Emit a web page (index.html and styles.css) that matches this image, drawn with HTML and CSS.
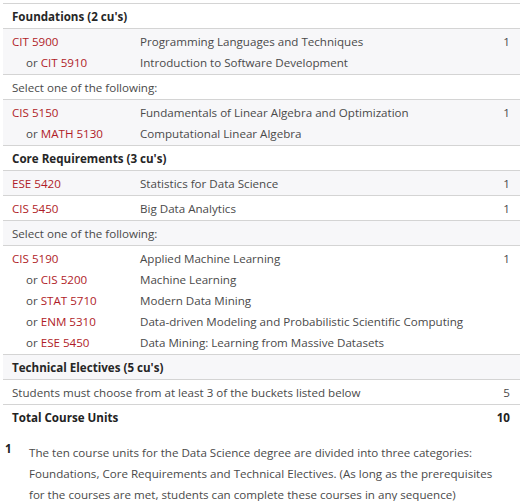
FILE: index.html
```html
<!DOCTYPE html>
<html lang="en">
<head>
<meta charset="utf-8">
<title>Data Science Curriculum</title>
<link rel="stylesheet" href="styles.css">
</head>
<body>
<table class="plan">
  <colgroup>
    <col class="c-code">
    <col class="c-title">
    <col class="c-hours">
  </colgroup>
  <tbody>
    <tr class="head"><td colspan="3">Foundations (2 cu's)</td></tr>
    <tr class="alt">
      <td class="code"><div><a href="#">CIT 5900</a></div><div class="or">or <a href="#">CIT 5910</a></div></td>
      <td class="title"><div>Programming Languages and Techniques</div><div>Introduction to Software Development</div></td>
      <td class="hours">1</td>
    </tr>
    <tr><td colspan="3">Select one of the following:</td></tr>
    <tr class="alt">
      <td class="code"><div><a href="#">CIS 5150</a></div><div class="or">or <a href="#">MATH 5130</a></div></td>
      <td class="title"><div>Fundamentals of Linear Algebra and Optimization</div><div>Computational Linear Algebra</div></td>
      <td class="hours">1</td>
    </tr>
    <tr class="head"><td colspan="3">Core Requirements (3 cu's)</td></tr>
    <tr class="alt">
      <td class="code"><a href="#">ESE 5420</a></td>
      <td class="title">Statistics for Data Science</td>
      <td class="hours">1</td>
    </tr>
    <tr>
      <td class="code"><a href="#">CIS 5450</a></td>
      <td class="title">Big Data Analytics</td>
      <td class="hours">1</td>
    </tr>
    <tr class="alt"><td colspan="3">Select one of the following:</td></tr>
    <tr>
      <td class="code">
        <div><a href="#">CIS 5190</a></div>
        <div class="or">or <a href="#">CIS 5200</a></div>
        <div class="or">or <a href="#">STAT 5710</a></div>
        <div class="or">or <a href="#">ENM 5310</a></div>
        <div class="or">or <a href="#">ESE 5450</a></div>
      </td>
      <td class="title">
        <div>Applied Machine Learning</div>
        <div>Machine Learning</div>
        <div>Modern Data Mining</div>
        <div>Data-driven Modeling and Probabilistic Scientific Computing</div>
        <div>Data Mining: Learning from Massive Datasets</div>
      </td>
      <td class="hours">1</td>
    </tr>
    <tr class="head alt"><td colspan="3">Technical Electives (5 cu's)</td></tr>
    <tr>
      <td colspan="2">Students must choose from at least 3 of the buckets listed below</td>
      <td class="hours">5</td>
    </tr>
    <tr class="total">
      <td colspan="2">Total Course Units</td>
      <td class="hours">10</td>
    </tr>
  </tbody>
</table>
<div class="footnote">
  <span class="fn-num">1</span>
  <p class="fn-text">The ten course units for the Data Science degree are divided into three categories: Foundations, Core Requirements and Technical Electives. (As long as the prerequisites for the courses are met, students can complete these courses in any sequence)</p>
</div>
</body>
</html>
```

FILE: styles.css
```css
html, body {
  margin: 0;
  padding: 0;
  background: #fff;
}
body {
  padding: 3px 6px 0 3px;
  font-family: "Open Sans", "Liberation Sans", sans-serif;
  font-size: 11.6px;
  line-height: 21px;
  color: #4a4a4a;
}
.plan {
  width: 517px;
  table-layout: fixed;
  border-collapse: collapse;
  border-top: 1px solid #d4d4d4;
}
.c-code {
  width: 128px;
}
.c-hours {
  width: 40px;
}
.plan td {
  padding: 2px 9px 1px 9px;
  vertical-align: top;
  border-bottom: 1px solid #d4d4d4;
  white-space: nowrap;
}
.plan tr.total td {
  border-bottom: none;
  font-weight: 700;
  color: #222;
}
.plan tr.alt td {
  background: #f7f7f9;
}
.plan tr.head td {
  font-weight: 700;
  color: #262626;
}
.plan td.hours {
  text-align: right;
  padding-right: 10px;
}
.or {
  padding-left: 14px;
}
a {
  color: #b01c28;
  text-decoration: none;
}
.footnote {
  display: flex;
  margin-top: 13px;
}
.fn-num {
  width: 24px;
  padding-left: 2px;
  font-weight: 700;
  color: #222;
  line-height: 14px;
  margin-top: 0;
  flex: none;
}
.fn-text {
  margin: 0;
  width: 476px;
}
```
